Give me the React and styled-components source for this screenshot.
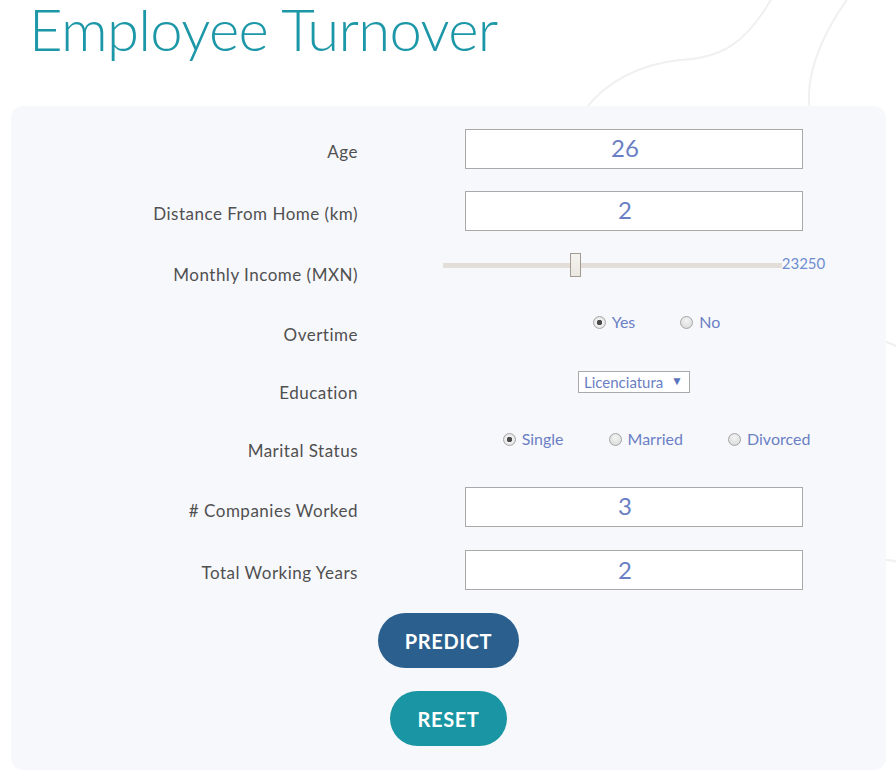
import React, { useState } from "react";
import styled, { createGlobalStyle } from "styled-components";

const GlobalStyle = createGlobalStyle`
	html, body {
		margin: 0;
		padding: 0;
		background: #ffffff;
		font-family: "Lato", "Noto Sans", sans-serif;
	}
	* {
		box-sizing: border-box;
	}
`;

const Page = styled.div`
	position: relative;
	min-height: 778px;
	padding: 0 10px 8px 11px;
	overflow: hidden;
`;

const Curves = styled.svg`
	position: absolute;
	top: 0;
	left: 0;
	width: 896px;
	height: 778px;
	pointer-events: none;
	z-index: 0;
`;

const Title = styled.h1`
	position: relative;
	z-index: 1;
	margin: 0 0 0 18px;
	height: 106px;
	padding-top: 0;
	font-family: "Lato", sans-serif;
	font-weight: 300;
	font-size: 58px;
	line-height: 58px;
	color: #1b97a7;
	letter-spacing: -0.7px;
`;

const Panel = styled.div`
	position: relative;
	z-index: 1;
	background: #f7f8fc;
	border-radius: 12px;
	padding: 15px 0 24px;
	display: flex;
	flex-direction: column;
	align-items: center;
`;

const Row = styled.div`
	width: 100%;
	height: ${(p) => p.$h}px;
	display: grid;
	grid-template-columns: 347px 448px;
	column-gap: 52px;
	align-items: center;
`;

const Label = styled.div`
	text-align: right;
	font-size: 17px;
	line-height: 20px;
	letter-spacing: 0.5px;
	color: #505050;
`;

const Control = styled.div`
	display: flex;
	justify-content: center;
	align-items: center;
	margin-bottom: ${(p) => p.$lift * 2}px;
`;

const NumberBox = styled.input`
	width: 338px;
	height: 40px;
	border: 1px solid #a9a9a9;
	background: #ffffff;
	text-align: center;
	font-family: "Lato", sans-serif;
	font-size: 24px;
	color: #6b80c4;
	outline: none;
	padding: 0 18px 2px 0;
`;

const SliderWrap = styled.div`
	display: flex;
	align-items: center;
`;

const Range = styled.input`
	-webkit-appearance: none;
	appearance: none;
	width: 339px;
	height: 24px;
	margin: 0;
	background: transparent;
	&::-webkit-slider-runnable-track {
		height: 5px;
		background: #e3ded7;
	}
	&::-webkit-slider-thumb {
		-webkit-appearance: none;
		width: 11px;
		height: 24px;
		margin-top: -10px;
		border: 1px solid #a29b92;
		background: linear-gradient(#f5f3f0, #ebe7e2);
	}
`;

const RangeValue = styled.span`
	font-size: 15px;
	color: #6f8ed0;
	margin-top: -4px;
`;

const RadioGroup = styled.div`
	display: flex;
	align-items: center;
`;

const RadioItem = styled.label`
	display: flex;
	align-items: center;
	gap: 6px;
	margin-left: 45px;
	font-size: 16px;
	color: #6b80c4;
	cursor: pointer;
`;

const RadioDot = styled.input`
	-webkit-appearance: none;
	appearance: none;
	width: 13px;
	height: 13px;
	margin: 1px 0 0;
	border-radius: 50%;
	border: 1px solid #a5a5a5;
	background: radial-gradient(circle at 50% 35%, #f4f4f4, #d6d6d6);
	&:checked {
		background: radial-gradient(circle, #4a4a4a 0 2.5px, #f2f2f2 3px, #d8d8d8 100%);
	}
`;

const SelectWrap = styled.div`
	position: relative;
	width: 112px;
	height: 22px;
`;

const Select = styled.select`
	-webkit-appearance: none;
	appearance: none;
	width: 100%;
	height: 100%;
	border: 1px solid #a9a9a9;
	border-radius: 0;
	background: #ffffff;
	padding: 0 0 0 5px;
	font-family: "Lato", sans-serif;
	font-size: 15px;
	color: #6b80c4;
	outline: none;
`;

const Caret = styled.span`
	position: absolute;
	right: 7px;
	top: 2px;
	font-size: 12px;
	color: #5b74bd;
	pointer-events: none;
`;

const Button = styled.button`
	border: none;
	border-radius: 28px;
	height: 55px;
	padding: 0 ${(p) => p.$pad}px;
	margin-top: ${(p) => p.$top}px;
	background: ${(p) => p.$bg};
	color: #ffffff;
	font-family: "Lato", sans-serif;
	font-weight: 700;
	font-size: 20px;
	letter-spacing: 0.6px;
	cursor: pointer;
`;

const Radios = ({ name, options, value, onChange }) => (
	<RadioGroup>
		{options.map((o) => (
			<RadioItem key={o}>
				<RadioDot
					type="radio"
					name={name}
					checked={value === o}
					onChange={() => onChange(o)}
				/>
				{o}
			</RadioItem>
		))}
	</RadioGroup>
);

const initial = {
	age: "26",
	distance: "2",
	income: 23250,
	overtime: "Yes",
	education: "Licenciatura",
	marital: "Single",
	companies: "3",
	years: "2",
};

const App = () => {
	const [form, setForm] = useState(initial);
	const set = (key) => (v) => setForm((f) => ({ ...f, [key]: v }));
	const setInput = (key) => (e) => set(key)(e.target.value);

	return (
		<>
			<GlobalStyle />
			<Page>
				<Curves viewBox="0 0 896 778">
					<g fill="none" stroke="#f0f0f0" strokeWidth="2">
						<path d="M772 -2 C745 45 720 58 680 60 C640 64 605 82 585 110" />
						<path d="M848 -2 C818 40 805 80 810 110" />
						<path d="M886 342 C890 343 894 345 898 347" />
						<path d="M886 560 C890 560 894 561 898 562" />
					</g>
				</Curves>
				<Title>Employee Turnover</Title>
				<Panel>
					<Row $h={62}>
						<Label>Age</Label>
						<Control $lift={3.5}>
							<NumberBox value={form.age} onChange={setInput("age")} />
						</Control>
					</Row>
					<Row $h={62}>
						<Label>Distance From Home (km)</Label>
						<Control $lift={3.5}>
							<NumberBox value={form.distance} onChange={setInput("distance")} />
						</Control>
					</Row>
					<Row $h={60}>
						<Label>Monthly Income (MXN)</Label>
						<Control $lift={10}>
							<SliderWrap>
								<Range
									type="range"
									min={0}
									max={59770}
									step={50}
									value={form.income}
									onChange={(e) => set("income")(Number(e.target.value))}
								/>
								<RangeValue>{form.income}</RangeValue>
							</SliderWrap>
						</Control>
					</Row>
					<Row $h={59}>
						<Label>Overtime</Label>
						<Control $lift={13}>
							<Radios
								name="overtime"
								options={["Yes", "No"]}
								value={form.overtime}
								onChange={set("overtime")}
							/>
						</Control>
					</Row>
					<Row $h={58}>
						<Label>Education</Label>
						<Control $lift={11}>
							<SelectWrap>
								<Select value={form.education} onChange={setInput("education")}>
									<option>Preparatoria</option>
									<option>Licenciatura</option>
									<option>Maestría</option>
									<option>Doctorado</option>
								</Select>
								<Caret>▼</Caret>
							</SelectWrap>
						</Control>
					</Row>
					<Row $h={58}>
						<Label>Marital Status</Label>
						<Control $lift={12.5}>
							<Radios
								name="marital"
								options={["Single", "Married", "Divorced"]}
								value={form.marital}
								onChange={set("marital")}
							/>
						</Control>
					</Row>
					<Row $h={61}>
						<Label># Companies Worked</Label>
						<Control $lift={4}>
							<NumberBox value={form.companies} onChange={setInput("companies")} />
						</Control>
					</Row>
					<Row $h={63}>
						<Label>Total Working Years</Label>
						<Control $lift={2.5}>
							<NumberBox value={form.years} onChange={setInput("years")} />
						</Control>
					</Row>
					<Button $bg="#2a5f8e" $pad={27} $top={9}>
						PREDICT
					</Button>
					<Button $bg="#1a95a3" $pad={28} $top={23} onClick={() => setForm(initial)}>
						RESET
					</Button>
				</Panel>
			</Page>
		</>
	);
};

export default App;
